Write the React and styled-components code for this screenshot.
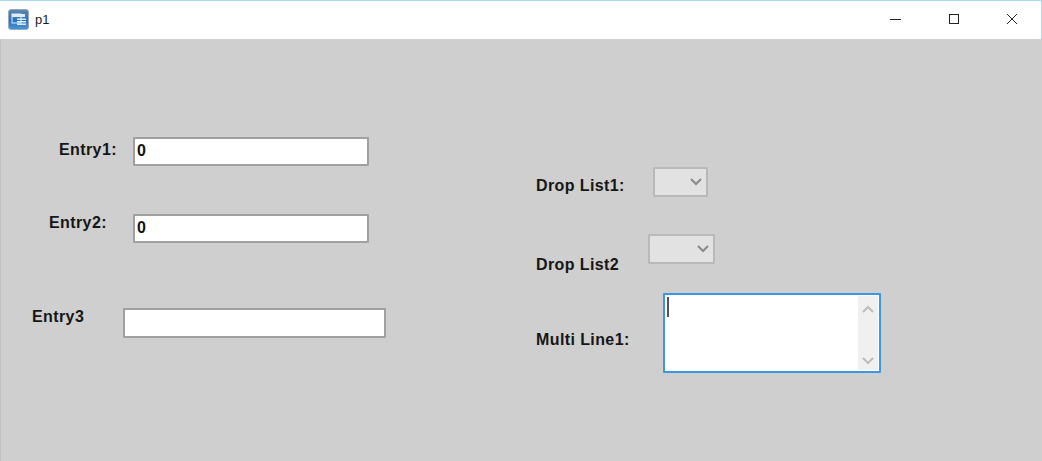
import React from "react";
import styled, { createGlobalStyle } from "styled-components";

const Global = createGlobalStyle`
  html, body { margin: 0; padding: 0; background: #cfcfcf; }
  * { box-sizing: border-box; }
`;

const Window = styled.div`
  width: 1042px;
  height: 461px;
  display: flex;
  flex-direction: column;
  overflow: hidden;
  background: #cfcfcf;
  font-family: "Liberation Sans", Arial, sans-serif;
  color: #161616;
`;

const TitleBar = styled.header`
  height: 39px;
  flex: none;
  display: flex;
  align-items: center;
  background: #fff;
  border-top: 1px solid #a9dbf8;
  border-right: 1px solid #a9dbf8;
  padding-left: 8px;
  padding-bottom: 2px;
`;

const TitleText = styled.span`
  margin-left: 6px;
  font-size: 13px;
  color: #1a1a2a;
  flex: 1;
`;

const WinButton = styled.div`
  width: 58px;
  height: 100%;
  display: flex;
  align-items: center;
  justify-content: center;
`;

const Body = styled.main`
  flex: 1;
  display: flex;
  border-left: 1px solid #c2c2c2;
`;

const Column = styled.section`
  width: ${(p) => p.$width}px;
  flex: none;
  display: flex;
  flex-direction: column;
`;

const Row = styled.div`
  display: flex;
  align-items: flex-start;
  margin-top: ${(p) => p.$top}px;
  margin-left: ${(p) => p.$left}px;
`;

const Label = styled.label`
  display: block;
  width: ${(p) => p.$width}px;
  flex: none;
  margin-top: ${(p) => p.$top}px;
  font-size: 16px;
  line-height: 18px;
  font-weight: 700;
  letter-spacing: 0.4px;
  white-space: nowrap;
`;

const Entry = styled.input`
  display: block;
  width: ${(p) => p.$width}px;
  height: ${(p) => p.$height}px;
  padding: 0 2px 2px;
  border: 2px solid #a0a0a0;
  border-radius: 1px;
  background: #fff;
  outline: none;
  font-family: "Liberation Sans", Arial, sans-serif;
  font-size: 16px;
  font-weight: 700;
  color: #111;
`;

const DropList = styled.div`
  width: ${(p) => p.$width}px;
  height: 30px;
  display: flex;
  align-items: center;
  justify-content: flex-end;
  padding-right: 3px;
  background: #e2e2e2;
  border: 2px solid #b9b9b9;
  border-radius: 1px;
`;

const MultiLine = styled.div`
  position: relative;
  width: 218px;
  height: 80px;
  display: flex;
  justify-content: flex-end;
  background: #fff;
  border: 2px solid #3f96e0;
  border-radius: 1px;
`;

const Caret = styled.span`
  position: absolute;
  left: 2px;
  top: 2px;
  width: 2px;
  height: 20px;
  background: #555;
`;

const ScrollTrack = styled.div`
  width: 20px;
  display: flex;
  flex-direction: column;
  justify-content: space-between;
  align-items: center;
  padding: 8px 0 4px;
  margin: 1px 1px 1px 0;
  background: #f0f0f0;
`;

const Chevron = ({ up, color = "#8a8a8a", size = 14 }) => (
  <svg width={size} height={size * 0.72} viewBox="0 0 14 10" fill="none">
    <path d={up ? "M2 8 L7 3 L12 8" : "M2 2 L7 7 L12 2"} stroke={color} strokeWidth="2" />
  </svg>
);

const AppIcon = () => (
  <svg width="21" height="21" viewBox="0 0 21 21" style={{ flex: "none" }}>
    <defs>
      <linearGradient id="ig" x1="0" y1="0" x2="0" y2="1">
        <stop offset="0" stopColor="#5f86ad" />
        <stop offset="0.55" stopColor="#2673bf" />
        <stop offset="1" stopColor="#4a94d8" />
      </linearGradient>
    </defs>
    <rect x="0.5" y="0.5" width="20" height="20" rx="2.5" fill="url(#ig)" stroke="#9aa9b5" />
    <rect x="4" y="5" width="13" height="3" fill="#e4ecf3" />
    <rect x="4" y="5" width="9" height="9" fill="none" stroke="#dfe9f2" />
    <rect x="9" y="9.5" width="9" height="1.4" fill="#eef3f8" />
    <rect x="9" y="12" width="9" height="1.4" fill="#eef3f8" />
    <rect x="9" y="14.5" width="9" height="1.4" fill="#eef3f8" />
  </svg>
);

export default function App() {
  return (
    <Window>
      <Global />
      <TitleBar>
        <AppIcon />
        <TitleText>p1</TitleText>
        <WinButton>
          <svg width="12" height="12" viewBox="0 0 12 12"><path d="M0 6.5H11" stroke="#222" /></svg>
        </WinButton>
        <WinButton>
          <svg width="12" height="12" viewBox="0 0 12 12"><rect x="1.5" y="1.5" width="9" height="9" fill="none" stroke="#222" /></svg>
        </WinButton>
        <WinButton>
          <svg width="12" height="12" viewBox="0 0 12 12"><path d="M1 1L11 11M11 1L1 11" stroke="#222" /></svg>
        </WinButton>
      </TitleBar>
      <Body>
        <Column $width={535}>
          <Row $top={98} $left={58}>
            <Label $width={74} $top={4}>Entry1:</Label>
            <Entry readOnly value="0" $width={236} $height={29} />
          </Row>
          <Row $top={48} $left={48}>
            <Label $width={84} $top={0}>Entry2:</Label>
            <Entry readOnly value="0" $width={236} $height={29} />
          </Row>
          <Row $top={65} $left={31}>
            <Label $width={91} $top={0}>Entry3</Label>
            <Entry readOnly value="" $width={263} $height={30} />
          </Row>
        </Column>
        <Column $width={400}>
          <Row $top={128} $left={0}>
            <Label $width={117} $top={10}>Drop List1:</Label>
            <DropList $width={55}><Chevron /></DropList>
          </Row>
          <Row $top={37} $left={0}>
            <Label $width={112} $top={22}>Drop List2</Label>
            <DropList $width={67}><Chevron /></DropList>
          </Row>
          <Row $top={19} $left={0}>
            <Label $width={127} $top={38}>Multi Line1:</Label>
            <MultiLine>
              <Caret />
              <ScrollTrack>
                <Chevron up color="#bdbdbd" />
                <Chevron color="#bdbdbd" />
              </ScrollTrack>
            </MultiLine>
          </Row>
        </Column>
      </Body>
    </Window>
  );
}
